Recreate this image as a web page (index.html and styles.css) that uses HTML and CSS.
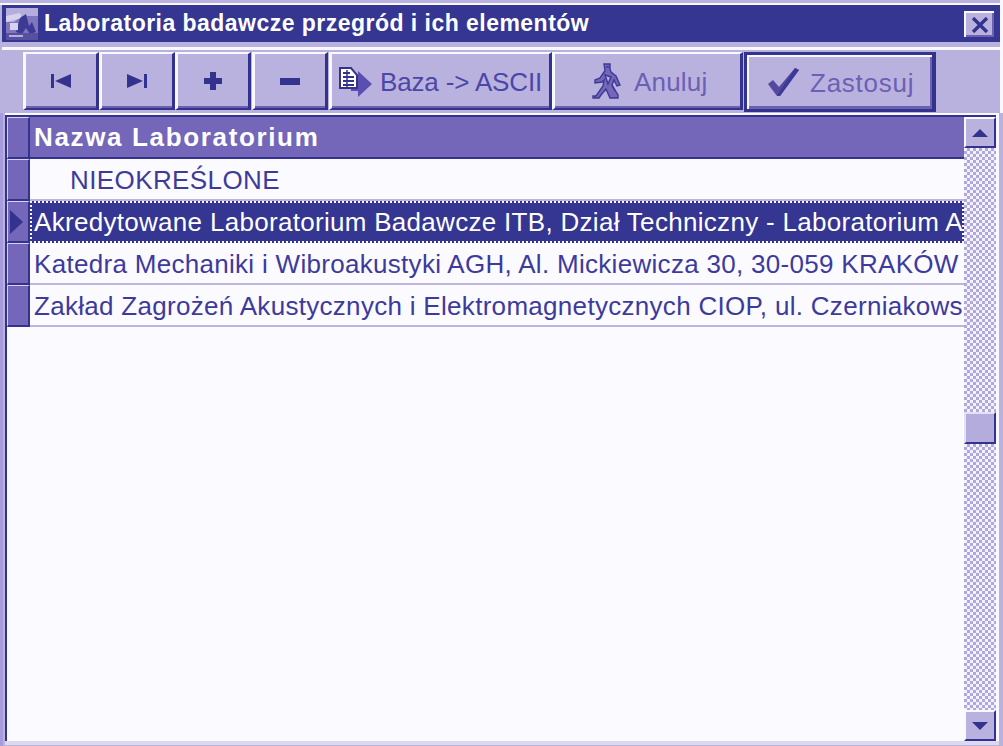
FILE: index.html
```html
<!DOCTYPE html>
<html lang="pl">
<head>
<meta charset="utf-8">
<title>Laboratoria badawcze przegród i ich elementów</title>
<link rel="stylesheet" href="styles.css">
</head>
<body>
<div class="app">
  <div class="upper">
    <div class="titlebar">
      <svg class="appicon" width="32" height="32" viewBox="0 0 32 32"><rect width="32" height="32" fill="#7f76bd"/><polygon points="0,0 32,0 32,8 16,8 8,14 0,14" fill="#b5aedd"/><polygon points="0,8 14,5 16,10 0,14" fill="#d5d1ee"/><polygon points="14,10 20,6 23,18 26,14 30,24 24,26 20,20 16,26 10,24" fill="#3d3a96"/><polygon points="4,15 12,15 12,22 4,22" fill="#d5d1ee"/><rect y="25" width="32" height="7" fill="#57509f"/><rect x="3" y="27" width="14" height="2" fill="#b5aedd"/></svg>
      <span class="titletext">Laboratoria badawcze przegród i ich elementów</span>
      <button class="close" type="button" aria-label="Zamknij"><svg width="18" height="16" viewBox="0 0 18 16"><path d="M2 1 L16 15 M16 1 L2 15" stroke="#33338f" stroke-width="3.4" fill="none"/></svg></button>
    </div>
    <div class="toolbar">
      <button class="btn nav" type="button"><svg width="20" height="14" viewBox="0 0 20 14"><rect width="3" height="14" fill="#33338f"/><polygon points="4,7 20,0 20,14" fill="#33338f"/></svg></button>
      <button class="btn nav" type="button"><svg width="20" height="14" viewBox="0 0 20 14"><polygon points="0,0 16,7 0,14" fill="#33338f"/><rect x="17" width="3" height="14" fill="#33338f"/></svg></button>
      <button class="btn nav" type="button"><svg width="18" height="18" viewBox="0 0 18 18"><path d="M6 0h6v6h6v6h-6v6H6v-6H0V6h6z" fill="#33338f"/></svg></button>
      <button class="btn nav minus" type="button"><svg width="20" height="7" viewBox="0 0 20 7"><rect width="20" height="7" fill="#33338f"/></svg></button>
      <button class="btn wide ascii" type="button"><svg class="doc" width="34" height="31" viewBox="0 0 34 31"><polygon points="12,9 19,9 19,4 33,17 19,30 19,24 12,24" fill="#5a4fb0"/><path d="M1 1h11l6 7v13H1z" fill="#fff" stroke="#33338f" stroke-width="2"/><path d="M4 6h7M4 10h11M4 14h11M4 18h11" stroke="#33338f" stroke-width="2"/><path d="M8 3v17" stroke="#33338f" stroke-width="1.5"/></svg><span>Baza -&gt; ASCII</span></button>
      <button class="btn wide cancel" type="button"><svg width="30" height="36" viewBox="0 0 30 36"><path d="M12 1h6v5l1 3 5 4 4 9-3 1-3-6-2 5 6 10v3h-8l-4-9-5 6-2 3H1v-2h3l7-10 1-6-2 2-7 1v-3l5-2 4-6 1-1z" fill="#7466b8" stroke="#3d3a96" stroke-width="1.4"/><path d="M13 12l6 2-3 7zM20 22l3 6M14 4h3" stroke="#3d3a96" stroke-width="1.5" fill="#b8b0dc"/></svg><span>Anuluj</span></button>
      <button class="btn wide apply" type="button"><svg width="32" height="30" viewBox="0 0 32 30"><path d="M1 17l5-4 6 7L28 1l4 2L13 29h-3z" fill="#54489f"/><path d="M28 1l4 2L13 29h-3z" fill="#3d3a96"/></svg><span>Zastosuj</span></button>
    </div>
  </div>
  <div class="gridwrap">
    <div class="grid">
      <div class="table">
        <div class="row head"><div class="ind"></div><div class="cell">Nazwa Laboratorium</div></div>
        <div class="row"><div class="ind"></div><div class="cell indent">NIEOKREŚLONE</div></div>
        <div class="row current"><div class="ind"><svg width="13" height="24" viewBox="0 0 13 24"><polygon points="0,0 13,12 0,24" fill="#33338f"/></svg></div><div class="cell">Akredytowane Laboratorium Badawcze ITB, Dział Techniczny - Laboratorium Akustyczne</div></div>
        <div class="row"><div class="ind"></div><div class="cell">Katedra Mechaniki i Wibroakustyki AGH, Al. Mickiewicza 30, 30-059 KRAKÓW</div></div>
        <div class="row"><div class="ind"></div><div class="cell">Zakład Zagrożeń Akustycznych i Elektromagnetycznych CIOP, ul. Czerniakowska 16</div></div>
      </div>
      <div class="scroll">
        <div class="sbtn"><svg width="16" height="8" viewBox="0 0 16 8"><polygon points="8,0 16,8 0,8" fill="#33338f"/></svg></div>
        <div class="track upper-track"></div>
        <div class="thumb"></div>
        <div class="track lower-track"></div>
        <div class="sbtn"><svg width="16" height="8" viewBox="0 0 16 8"><polygon points="0,0 16,0 8,8" fill="#33338f"/></svg></div>
      </div>
    </div>
  </div>
</div>
</body>
</html>
```
FILE: styles.css
```css
* { box-sizing: border-box; }
html, body { margin: 0; padding: 0; }
body { width: 1003px; height: 746px; overflow: hidden; font-family: "Liberation Sans", Arial, sans-serif; }
.app { width: 1003px; height: 746px; display: flex; flex-direction: column; background: #bab2de; }
.upper { height: 113px; border-right: 3px solid #f8f8fe; padding-top: 3px; flex: none; }
.upper::before { content: ""; display: block; height: 2px; background: #f8f8fe; }
.titlebar {
  margin-left: 2px;
  height: 37px;
  background: #353592;
  display: flex;
  align-items: center;
  padding: 0 6px 0 4px;
  box-shadow: 0 5px 0 #bab2de, 0 8px 0 #f8f8fe;
}
.appicon { flex: none; }
.titletext { color: #fff; font-weight: 700; font-size: 23px; margin-left: 6px; flex: 1; white-space: nowrap; letter-spacing: 0.47px; }
.close {
  width: 30px; height: 26px; padding: 0; background: #bab2de; display: flex; align-items: center; justify-content: center;
  border: 0; border-top: 2px solid #f8f8fe; border-left: 2px solid #f8f8fe; box-shadow: inset -2px -2px 0 #6c60b0;
}
.toolbar { display: flex; margin-top: 10px; padding-left: 23px; align-items: flex-start; }
.btn {
  height: 58px; padding: 0; display: flex; align-items: center; justify-content: center;
  background: #bab2de;
  border: 0; border-top: 2px solid #f8f8fe; border-left: 3px solid #f8f8fe; border-right: 3px solid #33338f; border-bottom: 2px solid #33338f;
  box-shadow: inset 0 -2px 0 #6c60b0;
  font-family: inherit; font-size: 26px; white-space: nowrap; color: #4a47a8;
}
.nav { width: 76px; flex: none; }
.minus { margin-left: 1px; }
.wide span { padding-top: 2px; }
.ascii { width: 223px; margin-left: 1px; letter-spacing: -0.15px; justify-content: flex-start; padding-left: 7px; }
.ascii span { margin-left: 7px; }
.doc { margin-top: 3px; }
.cancel { width: 191px; justify-content: flex-start; padding-left: 37px; color: #6c60b4; letter-spacing: 0.2px; }
.cancel span { margin-left: 12px; }
.apply {
  width: 192px; height: 60px; margin-left: 1px; justify-content: flex-start; padding-left: 20px; color: #6c60b4; letter-spacing: 0.75px;
  border: 3px solid #33338f; border-right-width: 4px;
  box-shadow: inset 2px 2px 0 #f8f8fe, inset -2px -3px 0 #6c60b0;
}
.apply span { margin-left: 11px; }
.gridwrap { flex: 1; min-height: 0; border-left: 3px solid #a69cdc; padding: 0 4px 5px 2px; }
.grid {
  height: 100%;
  border-top: 2px solid #f8f8fe;
  border-right: 3px solid #f8f8fe;
  display: flex;
  background: #fbfbff;
  position: relative;
}
.table {
  flex: 1; min-width: 0;
  border-left: 2px solid #33338f;
  padding-top: 2px;
  background: #fbfbff linear-gradient(#33338f, #33338f) no-repeat 0 0 / 100% 2px;
}
.grid::after { content: ""; position: absolute; left: 0; right: -3px; bottom: -4px; height: 4px; background: #dcd8ee; }
.row { height: 42px; display: flex; }
.ind {
  width: 23px; flex: none; background: #7466b8;
  border-top: 1px solid #d8d4f0; border-left: 1px solid #d8d4f0;
  border-right: 2px solid #33338f; border-bottom: 2px solid #33338f;
  display: flex; align-items: center; padding-left: 2px;
}
.cell {
  flex: 1; min-width: 0; overflow: hidden; white-space: nowrap;
  font-size: 26px; line-height: 42px; height: 42px; color: #3d3a9c; padding-left: 4px;
  border-bottom: 2px solid #bdb5df; letter-spacing: 0.3px;
}
.indent { padding-left: 40px; letter-spacing: 0.4px; }
.head .cell { background: #7466b8; color: #fff; font-weight: 700; line-height: 40px; letter-spacing: 1.65px; border-bottom: 2px solid #33338f; }
.current .cell { background: #353592; color: #fff; border-bottom: 0; outline: 2px dotted #f8f8fe; outline-offset: -2px; }
.scroll { width: 32px; flex: none; display: flex; flex-direction: column; border-top: 2px solid #33338f; }
.sbtn {
  height: 31px; flex: none; background: #bab2de; display: flex; align-items: center; justify-content: center;
  border-top: 2px solid #f8f8fe; border-left: 2px solid #f8f8fe; border-right: 2px solid #33338f; border-bottom: 2px solid #33338f;
}
.track { background: repeating-conic-gradient(#b0a8dc 0 25%, #f4f2fc 0 50%) 0 0 / 6px 6px; }
.upper-track { height: 264px; flex: none; }
.lower-track { flex: 1; }
.thumb {
  height: 32px; flex: none; background: #b4acdc;
  border-top: 2px solid #e4e0f6; border-left: 2px solid #e4e0f6; border-right: 2px solid #33338f; border-bottom: 2px solid #33338f;
}
```
